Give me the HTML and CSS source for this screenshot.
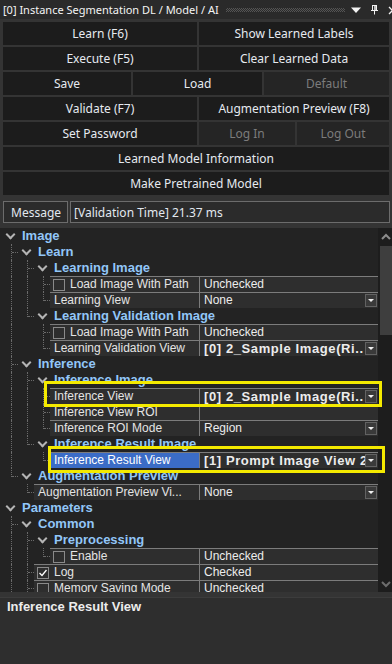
FILE: index.html
```html
<!DOCTYPE html>
<html>
<head>
<meta charset="utf-8">
<link rel="stylesheet" href="styles.css">
</head>
<body>
<div class="app">
  <div class="titlebar">
    <span class="title">[0] Instance Segmentation DL / Model / AI</span>
    <span class="grip"></span>
    <svg class="tic" width="12" height="12" viewBox="0 0 12 12"><path d="M1 3.5h10L6 9z" fill="#f2f2f2"/></svg>
    <svg class="tic" width="12" height="12" viewBox="0 0 12 12"><path d="M4 1.5h5M4.5 1.5v5M8.5 1.5v5M3 6.5h7M6.5 6.5v4" stroke="#f2f2f2" stroke-width="1" fill="none"/><path d="M7 2v4.5" stroke="#f2f2f2" stroke-width="1.5"/></svg>
    <svg class="tic x" width="12" height="12" viewBox="0 0 12 12"><path d="M3 3l7 7M10 3l-7 7" stroke="#f2f2f2" stroke-width="1.3"/></svg>
  </div>

  <div class="buttons">
    <div class="brow r-a"><div class="btn">Learn (F6)</div><div class="btn">Show Learned Labels</div></div>
    <div class="brow r-a"><div class="btn">Execute (F5)</div><div class="btn">Clear Learned Data</div></div>
    <div class="brow r-b"><div class="btn">Save</div><div class="btn">Load</div><div class="btn off">Default</div></div>
    <div class="brow r-a"><div class="btn">Validate (F7)</div><div class="btn">Augmentation Preview (F8)</div></div>
    <div class="brow r-c"><div class="btn">Set Password</div><div class="btn off">Log In</div><div class="btn off">Log Out</div></div>
    <div class="brow"><div class="btn">Learned Model Information</div></div>
    <div class="brow"><div class="btn">Make Pretrained Model</div></div>
  </div>

  <div class="message">
    <div class="mlabel">Message</div>
    <div class="mvalue">[Validation Time] 21.37 ms</div>
  </div>

  <div class="grid">
    <div class="tree">
      <div class="row cat"><span class="chev"></span><span class="ct">Image</span></div>
      <div class="row cat"><i class="g t"></i><span class="chev"></span><span class="ct">Learn</span></div>
      <div class="row cat"><i class="g v"></i><i class="g t"></i><span class="chev"></span><span class="ct">Learning Image</span></div>
      <div class="row prop"><i class="g v"></i><i class="g v"></i><i class="g t"></i><div class="cell"><span class="name"><span class="cb"></span>Load Image With Path</span><span class="val">Unchecked</span></div></div>
      <div class="row prop"><i class="g v"></i><i class="g v"></i><i class="g l"></i><div class="cell"><span class="name">Learning View</span><span class="val"><span class="vt">None</span><span class="dd"></span></span></div></div>
      <div class="row cat"><i class="g v"></i><i class="g l"></i><span class="chev"></span><span class="ct">Learning Validation Image</span></div>
      <div class="row prop"><i class="g v"></i><i class="g n"></i><i class="g t"></i><div class="cell"><span class="name"><span class="cb"></span>Load Image With Path</span><span class="val">Unchecked</span></div></div>
      <div class="row prop"><i class="g v"></i><i class="g n"></i><i class="g l"></i><div class="cell"><span class="name">Learning Validation View</span><span class="val"><span class="vt b">[0] 2_Sample Image(Ri..</span><span class="dd"></span></span></div></div>
      <div class="row cat"><i class="g t"></i><span class="chev"></span><span class="ct">Inference</span></div>
      <div class="row cat"><i class="g v"></i><i class="g t"></i><span class="chev"></span><span class="ct">Inference Image</span></div>
      <div class="row prop"><i class="g v"></i><i class="g v"></i><i class="g t"></i><div class="cell"><span class="name">Inference View</span><span class="val"><span class="vt b">[0] 2_Sample Image(Ri..</span><span class="dd"></span></span></div></div>
      <div class="row prop"><i class="g v"></i><i class="g v"></i><i class="g t"></i><div class="cell"><span class="name">Inference View ROI</span><span class="val"></span></div></div>
      <div class="row prop"><i class="g v"></i><i class="g v"></i><i class="g l"></i><div class="cell"><span class="name">Inference ROI Mode</span><span class="val"><span class="vt">Region</span><span class="dd"></span></span></div></div>
      <div class="row cat"><i class="g v"></i><i class="g l"></i><span class="chev"></span><span class="ct">Inference Result Image</span></div>
      <div class="row prop"><i class="g v"></i><i class="g n"></i><i class="g l"></i><div class="cell"><span class="name sel">Inference Result View</span><span class="val"><span class="vt b">[1] Prompt Image View 2</span><span class="dd"></span></span></div></div>
      <div class="row cat"><i class="g l"></i><span class="chev"></span><span class="ct">Augmentation Preview</span></div>
      <div class="row prop"><i class="g n"></i><i class="g l"></i><div class="cell"><span class="name">Augmentation Preview Vi...</span><span class="val"><span class="vt">None</span><span class="dd"></span></span></div></div>
      <div class="row cat"><span class="chev"></span><span class="ct">Parameters</span></div>
      <div class="row cat"><i class="g t"></i><span class="chev"></span><span class="ct">Common</span></div>
      <div class="row cat"><i class="g v"></i><i class="g t"></i><span class="chev"></span><span class="ct">Preprocessing</span></div>
      <div class="row prop"><i class="g v"></i><i class="g v"></i><i class="g l"></i><div class="cell"><span class="name"><span class="cb"></span>Enable</span><span class="val">Unchecked</span></div></div>
      <div class="row prop"><i class="g v"></i><i class="g t"></i><div class="cell"><span class="name"><span class="cb on"><svg width="10" height="10" viewBox="0 0 10 10"><path d="M1.5 5l2.5 2.5L8.5 2" stroke="#fff" stroke-width="1.3" fill="none"/></svg></span>Log</span><span class="val">Checked</span></div></div>
      <div class="row prop"><i class="g v"></i><i class="g t"></i><div class="cell"><span class="name"><span class="cb"></span>Memory Saving Mode</span><span class="val">Unchecked</span></div></div>
    </div>
    <div class="scroll">
      <div class="sarrow"><svg width="10" height="8" viewBox="0 0 10 8"><path d="M1 6l4-4 4 4" stroke="#8c8c8c" stroke-width="2" fill="none"/></svg></div>
      <div class="thumb"></div>
      <div class="strack"></div>
      <div class="sarrow dn"><svg width="10" height="8" viewBox="0 0 10 8"><path d="M1 2l4 4 4-4" stroke="#6c6c6c" stroke-width="2" fill="none"/></svg></div>
    </div>
    <div class="hl hl1"></div>
    <div class="hl hl2"></div>
  </div>

  <div class="desc">
    <div class="dtitle">Inference Result View</div>
  </div>
</div>
</body>
</html>
```

FILE: styles.css
```css
* { box-sizing: border-box; }
html, body { margin: 0; padding: 0; }
body {
  width: 392px;
  height: 664px;
  overflow: hidden;
  background: #343434;
  font-family: "Noto Sans", "Liberation Sans", sans-serif;
}
.app { width: 392px; height: 664px; display: flex; flex-direction: column; }

.titlebar {
  height: 19px;
  flex: none;
  background: #2a2a2a;
  display: flex;
  align-items: center;
  padding-left: 3px;
  color: #f4f4f4;
  font-size: 11px;
  white-space: nowrap;
  overflow: hidden;
}
.title { flex: none; line-height: 19px; }
.grip {
  flex: 1;
  height: 4px;
  margin: 0 5px 0 7px;
  background: conic-gradient(#555 25%, transparent 0 50%, #555 0 75%, transparent 0) 0 0 / 2px 2px;
}
.tic { flex: none; margin-right: 6px; }
.tic.x { margin-right: -6px; }

.buttons {
  flex: none;
  display: flex;
  flex-direction: column;
  gap: 2px;
  padding: 3px 3px 0 3px;
}
.brow { display: grid; grid-template-columns: 1fr; gap: 2px; height: 23px; }
.brow.r-a { grid-template-columns: 194px 1fr; }
.brow.r-b { grid-template-columns: 128px 129px 1fr; }
.brow.r-c { grid-template-columns: 194px 96px 1fr; }
.btn {
  background: #1c1c1c;
  color: #e6eaf0;
  font-size: 12px;
  display: flex;
  align-items: center;
  justify-content: center;
  white-space: nowrap;
}
.btn.off { background: #252525; color: #7c7c7c; }

.message {
  flex: none;
  display: flex;
  gap: 2px;
  height: 22px;
  margin: 6px 2px 0 3px;
  font-size: 12px;
  color: #e2e8f0;
}
.mlabel, .mvalue {
  border: 1px solid #6c6c6c;
  background: #2b2b2b;
  display: flex;
  align-items: center;
  white-space: nowrap;
}
.mlabel { width: 65px; padding-left: 7px; }
.mvalue { flex: 1; padding-left: 3px; }

.grid {
  position: relative;
  margin-top: 5px;
  height: 364px;
  display: flex;
  background: #232323;
  flex: none;
}
.tree {
  flex: 1;
  overflow: hidden;
  padding-left: 2px;
  font-family: "Liberation Sans", Arial, sans-serif;
  font-size: 12px;
}
.row {
  height: 16px;
  display: flex;
  align-items: stretch;
  white-space: nowrap;
}
.g { flex: none; width: 16px; position: relative; }
.g.v::before, .g.t::before, .g.l::before {
  content: "";
  position: absolute;
  left: 9px;
  top: 0;
  bottom: 0;
  border-left: 1px dotted #6a6a6a;
}
.g.l::before { bottom: 7px; }
.g.t::after, .g.l::after {
  content: "";
  position: absolute;
  left: 10px;
  right: 0;
  top: 8px;
  border-top: 1px dotted #6a6a6a;
}
.chev { flex: none; width: 16px; position: relative; }
.chev::before {
  content: "";
  position: absolute;
  left: 5px;
  top: 3px;
  width: 5px;
  height: 5px;
  border-right: 2px solid #b4b4b4;
  border-bottom: 2px solid #b4b4b4;
  transform: rotate(45deg);
}
.ct {
  margin-left: 4px;
  font-weight: bold;
  font-size: 13px;
  line-height: 16px;
  color: #92c6f8;
}
.cell {
  flex: 1;
  display: flex;
  border-top: 1px solid #7c7c7c;
  background: #2e2e2e;
  color: #e4e4e4;
  min-width: 0;
}
.name {
  flex: 1;
  min-width: 0;
  overflow: hidden;
  padding-left: 4px;
  display: flex;
  align-items: center;
  line-height: 15px;
}
.name.sel { background: #3b6cc6; color: #fff; }
.val {
  flex: none;
  width: 179px;
  border-left: 1px solid #7c7c7c;
  padding-left: 4px;
  display: flex;
  align-items: center;
  line-height: 15px;
  overflow: hidden;
  color: #ececec;
}
.vt { flex: 1; min-width: 0; overflow: hidden; white-space: nowrap; }
.vt.b { font-weight: bold; font-size: 13px; letter-spacing: 0.6px; }
.dd {
  flex: none;
  width: 12px;
  height: 13px;
  margin-right: 1px;
  background: #3a3a3a;
  border: 1px solid #626262;
  position: relative;
}
.dd::after {
  content: "";
  position: absolute;
  left: 2px;
  top: 4px;
  border-left: 3px solid transparent;
  border-right: 3px solid transparent;
  border-top: 3px solid #f0f0f0;
}
.cb {
  flex: none;
  width: 12px;
  height: 12px;
  border: 1px solid #8a8a8a;
  margin-left: -1px;
  margin-right: 5px;
  display: flex;
  align-items: center;
  justify-content: center;
}

.scroll {
  flex: none;
  width: 14px;
  background: #1d1d1d;
  display: flex;
  flex-direction: column;
}
.sarrow { height: 18px; display: flex; align-items: center; justify-content: center; padding-left: 2px; }
.sarrow.dn { height: 16px; }
.thumb { height: 89px; margin-left: 2px; background: #3e3e3e; }
.strack { flex: 1; }

.hl {
  position: absolute;
  border: 3px solid #f4ea00;
  pointer-events: none;
}
.hl1 { left: 44px; top: 153px; width: 338px; height: 26px; }
.hl2 { left: 48px; top: 218px; width: 337px; height: 27px; }

.desc {
  flex: 1;
  margin-top: 5px;
  background: #2e2e2e;
  border-top: 1px solid #3c3c3c;
  padding: 1px 0 0 7px;
}
.dtitle {
  font-family: "Liberation Sans", Arial, sans-serif;
  font-weight: bold;
  font-size: 13px;
  line-height: 16px;
  color: #ececec;
}
```
